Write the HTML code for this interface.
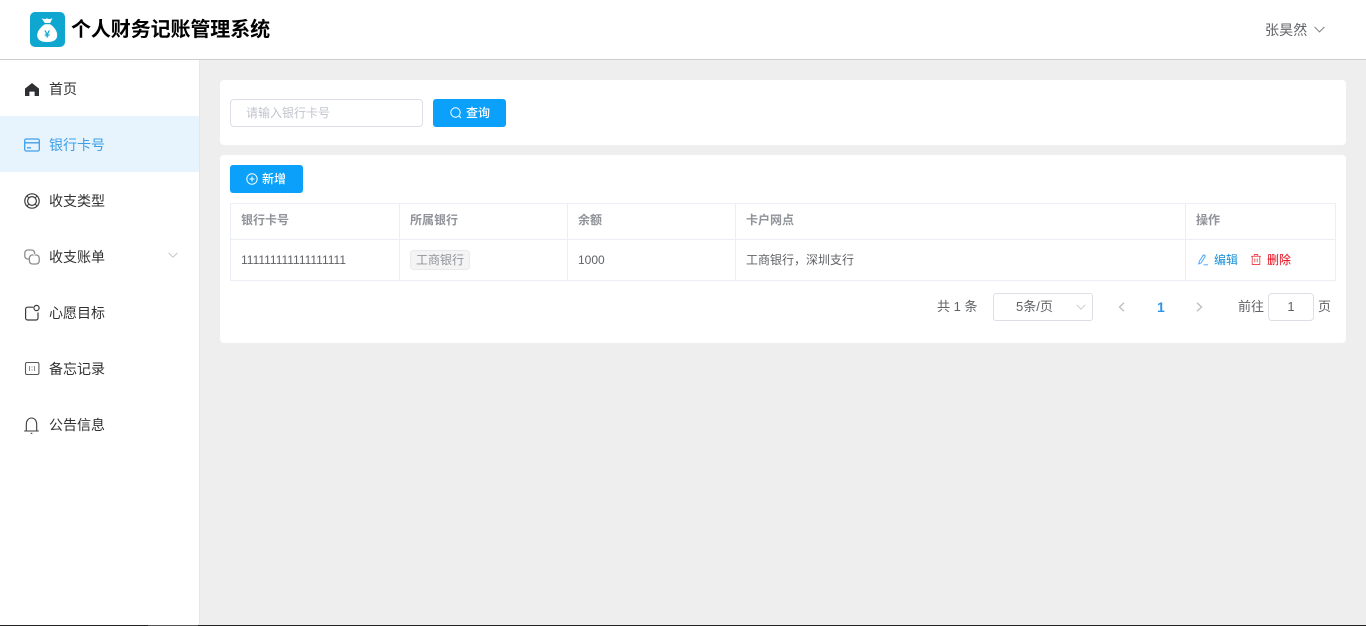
<!DOCTYPE html>
<html lang="zh-CN">
<head>
<meta charset="utf-8">
<title>个人财务记账管理系统</title>
<style>
*{box-sizing:border-box}
html,body{margin:0;padding:0;width:1366px;height:626px;overflow:hidden;background:#eee}
body{font-family:"Liberation Sans","Noto Sans CJK SC",sans-serif;font-size:13px;color:#606266;position:relative}
.a{position:absolute;white-space:nowrap}
svg{position:absolute;display:block;overflow:visible}
.t{line-height:20px;height:20px}
.menu{font-size:14px;color:#303133;left:49px;line-height:20px;height:20px}
.line{position:absolute;background:#ebeef5}
</style>
</head>
<body>
<!-- header -->
<div class="a" style="left:0;top:0;width:1366px;height:60px;background:#fff;border-bottom:1px solid #ccc"></div>
<svg style="left:30px;top:12px" width="35" height="35" viewBox="0 0 35 35">
<rect width="35" height="35" rx="5" fill="#0fa7cf"/>
<path d="M11.5 6 C13.5 7.2 15 7.4 17 6.4 C19 7.4 20.5 7.2 22.5 6 L20.2 11 L14.8 11Z" fill="#fff"/>
<path d="M14.8 12.3 H20.2 C24 14.8 27.2 19 27.2 23.2 C27.2 27.5 24 30 17.2 30 C10.4 30 7.2 27.5 7.2 23.2 C7.2 19 11 14.8 14.8 12.3Z" fill="#fff"/>
<text x="17.2" y="25.5" font-size="10.5" font-weight="700" fill="#0fa7cf" text-anchor="middle" font-family="Liberation Sans">¥</text>
</svg>
<div class="a" style="left:71px;top:16px;font-size:20px;line-height:28px;font-weight:700;color:#000;letter-spacing:-.1px">个人财务记账管理系统</div>
<div class="a t" style="left:1265px;top:20px;font-size:14px;color:#606266;letter-spacing:.1px">张昊然</div>
<svg style="left:1314px;top:26px" width="11" height="7" viewBox="0 0 11 7"><path d="M.6 1 L5.5 5.9 L10.4 1" fill="none" stroke="#808387" stroke-width="1"/></svg>

<!-- sidebar -->
<div class="a" style="left:0;top:60px;width:200px;height:566px;background:#fff;border-right:1px solid #e6e6e6"></div>
<div class="a" style="left:0;top:116px;width:199px;height:56px;background:#e8f4fd"></div>

<svg style="left:25px;top:83px" width="14" height="13" viewBox="0 0 14 13"><path d="M7 0 L14 5.6 V13 H9.6 V8.6 H4.4 V13 H0 V5.6Z" fill="#2f3033"/></svg>
<div class="a menu" style="top:79px">首页</div>

<svg style="left:24px;top:138px" width="16" height="14" viewBox="0 0 16 14" fill="none" stroke="#3d9fec" stroke-width="1.3"><rect x=".7" y="1" width="14.6" height="12" rx="1.6"/><path d="M.7 4.8 H15.3 M3 9.8 H7"/></svg>
<div class="a menu" style="top:135px;color:#3a9fe6">银行卡号</div>

<svg style="left:24px;top:193px" width="16" height="16" viewBox="0 0 16 16" fill="none" stroke="#3a3b3e" stroke-width="1.2"><circle cx="8" cy="8" r="7.2"/><circle cx="8" cy="8" r="4.4"/><path d="M3 3 L4.9 4.9 M13 3 L11.1 4.9 M3 13 L4.9 11.1 M13 13 L11.1 11.1" stroke-width=".9"/></svg>
<div class="a menu" style="top:191px">收支类型</div>

<svg style="left:24px;top:249px" width="16" height="16" viewBox="0 0 16 16" fill="none" stroke="#8d8d8d" stroke-width="1.3"><path d="M5 10 H3.8 A3 3 0 0 1 .8 7 V4 A3 3 0 0 1 3.8 1 H7.6 A3 3 0 0 1 10.6 4 V5"/><path d="M10.6 6 H12.2 A3 3 0 0 1 15.2 9 V12 A3 3 0 0 1 12.2 15 H8.4 A3 3 0 0 1 5.4 12 V9 A3 3 0 0 1 8.4 6 H9.6"/></svg>
<div class="a menu" style="top:247px">收支账单</div>
<svg style="left:168px;top:252px" width="10" height="6" viewBox="0 0 10 6"><path d="M.5 .8 L5 5.2 L9.5 .8" fill="none" stroke="#c2c5ca" stroke-width="1"/></svg>

<svg style="left:25px;top:305px" width="15" height="16" viewBox="0 0 15 16" fill="none" stroke="#3a3b3e" stroke-width="1.2"><path d="M8 2.2 H2.5 A2 2 0 0 0 .6 4.2 V13 A2 2 0 0 0 2.5 15 H11 A2 2 0 0 0 13 13 V7.5"/><circle cx="11.5" cy="3" r="2.6"/></svg>
<div class="a menu" style="top:303px">心愿目标</div>

<svg style="left:25px;top:362px" width="14" height="13" viewBox="0 0 14 13" fill="none" stroke="#55575a" stroke-width="1.1"><rect x=".5" y=".5" width="13.4" height="12" rx="1.5"/><path d="M4.5 4 V9 M9.5 4 V9 M7 4.5 V5.5 M7 7.5 V8.5" stroke="#8a8c90"/></svg>
<div class="a menu" style="top:359px">备忘记录</div>

<svg style="left:24px;top:417px" width="15" height="17" viewBox="0 0 15 17" fill="none" stroke="#3a3b3e" stroke-width="1.1"><path d="M.2 14 H14.8 M2.3 14 V7.5 C2.3 3.5 4.5 1 7.5 1 C10.5 1 12.7 3.5 12.7 7.5 V14"/><path d="M6.7 16.3 H8.3"/></svg>
<div class="a menu" style="top:415px">公告信息</div>

<!-- search card -->
<div class="a" style="left:220px;top:80px;width:1126px;height:65px;background:#fff;border-radius:4px"></div>
<div class="a" style="left:230px;top:99px;width:193px;height:28px;border:1px solid #dcdfe6;border-radius:4px;background:#fff"></div>
<div class="a t" style="left:246px;top:103px;color:#c0c4cc;font-size:12px">请输入银行卡号</div>
<div class="a" style="left:433px;top:99px;width:73px;height:28px;background:#0ba1fb;border-radius:3px"></div>
<svg style="left:450px;top:107px" width="12" height="12" viewBox="0 0 12 12" fill="none" stroke="#fff" stroke-width="1"><circle cx="5.5" cy="5.5" r="4.7"/><path d="M9 9 L11 11"/></svg>
<div class="a t" style="left:466px;top:103px;color:#fff;font-size:12px;font-weight:500">查询</div>

<!-- table card -->
<div class="a" style="left:220px;top:155px;width:1126px;height:188px;background:#fff;border-radius:4px"></div>
<div class="a" style="left:230px;top:165px;width:73px;height:28px;background:#0ba1fb;border-radius:3px"></div>
<svg style="left:246px;top:173px" width="12" height="12" viewBox="0 0 12 12" fill="none" stroke="#fff" stroke-width="1"><circle cx="6" cy="6" r="5.2"/><path d="M3.5 6 H8.5 M6 3.5 V8.5"/></svg>
<div class="a t" style="left:262px;top:169px;color:#fff;font-size:12px;font-weight:500">新增</div>

<!-- table lines -->
<div class="line" style="left:230px;top:203px;width:1106px;height:1px"></div>
<div class="line" style="left:230px;top:239px;width:1106px;height:1px"></div>
<div class="line" style="left:230px;top:280px;width:1106px;height:1px"></div>
<div class="line" style="left:230px;top:203px;width:1px;height:78px"></div>
<div class="line" style="left:399px;top:203px;width:1px;height:78px"></div>
<div class="line" style="left:567px;top:203px;width:1px;height:78px"></div>
<div class="line" style="left:735px;top:203px;width:1px;height:78px"></div>
<div class="line" style="left:1185px;top:203px;width:1px;height:78px"></div>
<div class="line" style="left:1335px;top:203px;width:1px;height:78px"></div>

<div class="a t" style="left:241px;top:210px;color:#909399;font-weight:700;font-size:12px">银行卡号</div>
<div class="a t" style="left:410px;top:210px;color:#909399;font-weight:700;font-size:12px">所属银行</div>
<div class="a t" style="left:578px;top:210px;color:#909399;font-weight:700;font-size:12px">余额</div>
<div class="a t" style="left:746px;top:210px;color:#909399;font-weight:700;font-size:12px">卡户网点</div>
<div class="a t" style="left:1196px;top:210px;color:#909399;font-weight:700;font-size:12px">操作</div>

<div class="a t" style="left:241px;top:250px;font-size:12px">111111111111111111</div>
<div class="a" style="left:410px;top:250px;width:60px;height:20px;background:#f4f4f5;border:1px solid #e9e9eb;border-radius:4px;color:#909399;font-size:12px;line-height:18px;text-align:center">工商银行</div>
<div class="a t" style="left:578px;top:250px;font-size:12px">1000</div>
<div class="a t" style="left:746px;top:250px;font-size:12px">工商银行，深圳支行</div>

<svg style="left:1198px;top:254px" width="11" height="12" viewBox="0 0 11 12" fill="none" stroke="#409eff" stroke-width=".9"><path d="M1.2 7.5 L5.5 .8 L7.4 2 L3.2 8.8 L.8 10Z M5.5 10.8 H10"/></svg>
<div class="a t" style="left:1214px;top:250px;font-size:12px;color:#1890d8">编辑</div>
<svg style="left:1251px;top:254px" width="10" height="11" viewBox="0 0 10 11" fill="none" stroke="#ee4a55" stroke-width=".9"><path d="M0 2.3 H10 M3.3 2.3 V.5 H6.7 V2.3 M1.2 2.3 V10.5 H8.8 V2.3 M3.8 4.5 V8.2 M6.2 4.5 V8.2"/></svg>
<div class="a t" style="left:1267px;top:250px;font-size:12px;color:#e60012">删除</div>

<!-- pagination -->
<div class="a t" style="left:937px;top:297px">共 1 条</div>
<div class="a" style="left:993px;top:293px;width:100px;height:28px;border:1px solid #dcdfe6;border-radius:3px"></div>
<div class="a t" style="left:1016px;top:297px">5条/页</div>
<svg style="left:1076px;top:304px" width="10" height="6" viewBox="0 0 10 6"><path d="M.7 .8 L5 5.2 L9.3 .8" fill="none" stroke="#c8cbd0" stroke-width="1"/></svg>
<svg style="left:1118px;top:302px" width="7" height="10" viewBox="0 0 7 10"><path d="M6 .7 L1.5 5 L6 9.3" fill="none" stroke="#bcbfc4" stroke-width="1.4"/></svg>
<div class="a t" style="left:1157px;top:297px;font-weight:700;font-size:14px;color:#2f94e8">1</div>
<svg style="left:1196px;top:302px" width="7" height="10" viewBox="0 0 7 10"><path d="M1 .7 L5.5 5 L1 9.3" fill="none" stroke="#bcbfc4" stroke-width="1.4"/></svg>
<div class="a t" style="left:1238px;top:297px">前往</div>
<div class="a" style="left:1268px;top:293px;width:46px;height:28px;border:1px solid #dcdfe6;border-radius:4px;text-align:center;line-height:26px;font-size:13px">1</div>
<div class="a t" style="left:1318px;top:297px">页</div>

<!-- bottom strip -->
<div class="a" style="left:0;top:625px;width:1366px;height:1px;background:#222"></div>
<div class="a" style="left:148px;top:625px;width:50px;height:1px;background:#555"></div>
</body>
</html>
